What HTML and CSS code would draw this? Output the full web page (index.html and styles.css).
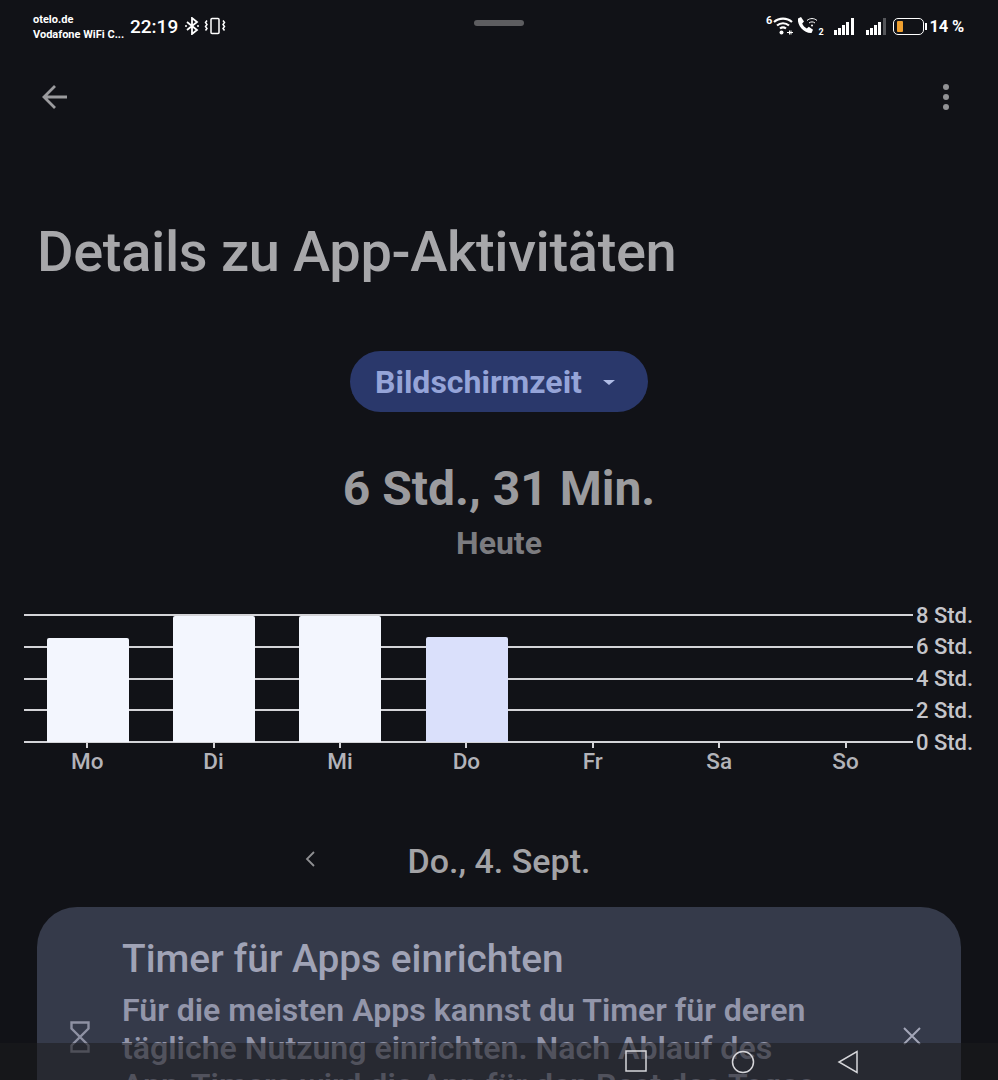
FILE: index.html
```html
<!DOCTYPE html>
<html lang="de">
<head>
  <meta charset="utf-8">
  <title>Details zu App-Aktivitäten</title>
  <link rel="stylesheet" href="styles.css">
</head>
<body>
<div class="screen">

  <div class="status-bar">
    <div class="carrier">
      <div>otelo.de</div>
      <div>Vodafone WiFi C...</div>
    </div>
    <div class="clock">22:19</div>
    <svg class="st-icon" width="14" height="18" viewBox="0 0 14 18" fill="none" stroke="#fff" stroke-width="1.800">
      <path d="M2 5l10 8-5 4V1l5 4-10 8"/>
      <circle cx="1" cy="9" r="1" fill="#fff" stroke="none"/>
      <circle cx="13" cy="9" r="1" fill="#fff" stroke="none"/>
    </svg>
    <svg class="st-icon vibrate" width="22" height="18" viewBox="0 0 22 18" fill="none" stroke="#fff" stroke-width="1.5">
      <rect x="7" y="1.5" width="8" height="15" rx="1"/>
      <path d="M3 3.500l-1.500 2 1.500 2-1.500 2 1.500 2-1.500 2M19 3.500l1.500 2-1.500 2 1.500 2-1.500 2 1.500 2"/>
    </svg>
    <div class="notch"></div>
    <div class="status-right">
      <span class="tiny six">6</span>
      <svg width="20" height="18" viewBox="0 0 20 18" fill="none" stroke="#fff" stroke-width="2.200">
        <path d="M1 5c5-4.500 13-4.500 18 0M4 8.500c3.400-3 8.600-3 12 0M7 11.500c1.800-1.400 4.200-1.400 6 0"/>
        <circle cx="8.500" cy="15.500" r="2" fill="#fff" stroke="none"/>
        <path d="M14 15.500h6M16.500 13.500v4M18 13.500v4" stroke-width="1"/>
      </svg>
      <svg class="call" width="22" height="20" viewBox="0 0 22 20">
        <path d="M1 2.500l3-1.500 3 4.500-1.800 2c.8 2 2.600 4 4.600 5l2-1.800 4.200 3-1.500 3.300c-7 .5-14.500-7-13.500-14.500z" fill="#fff"/>
        <path d="M10 4.500c3-2.600 7-2.600 10 0M12 7c1.800-1.500 4.200-1.500 6 0" fill="none" stroke="#fff" stroke-width="1"/>
        <circle cx="15" cy="9.500" r="1" fill="#fff"/>
      </svg>
      <span class="tiny two">2</span>
      <div class="signal">
        <i class="s1"></i><i class="s2"></i><i class="s3"></i><i class="s4"></i><i class="s5"></i>
      </div>
      <div class="signal second">
        <i class="s1"></i><i class="s2"></i><i class="s3"></i><i class="s4"></i><i class="s5 off"></i>
      </div>
      <div class="battery"><div class="battery-level"></div></div>
      <div class="battery-tip"></div>
      <div class="battery-text">14 %</div>
    </div>
  </div>

  <div class="toolbar">
    <svg width="28" height="28" viewBox="0 0 28 28" fill="none" stroke="#9b9b9e" stroke-width="2.800">
      <path d="M26 14H3M14 3L3 14l11 11"/>
    </svg>
    <div class="dots"><i></i><i></i><i></i></div>
  </div>

  <h1 class="title">Details zu App-Aktivitäten</h1>

  <div class="pill-row">
    <div class="pill">
      <span>Bildschirmzeit</span>
      <div class="caret"></div>
    </div>
  </div>

  <div class="total">6 Std., 31 Min.</div>
  <div class="today">Heute</div>

  <div class="chart">
    <div class="plot">
      <div class="grid-row"><div class="grid-line"></div><span>8 Std.</span></div>
      <div class="grid-row"><div class="grid-line"></div><span>6 Std.</span></div>
      <div class="grid-row"><div class="grid-line"></div><span>4 Std.</span></div>
      <div class="grid-row"><div class="grid-line"></div><span>2 Std.</span></div>
      <div class="grid-row"><div class="grid-line"></div><span>0 Std.</span></div>
      <div class="bars">
        <div class="bar-col"><div class="bar" style="height:104px"></div></div>
        <div class="bar-col"><div class="bar" style="height:126px"></div></div>
        <div class="bar-col"><div class="bar" style="height:126px"></div></div>
        <div class="bar-col"><div class="bar current" style="height:105px"></div></div>
        <div class="bar-col"></div>
        <div class="bar-col"></div>
        <div class="bar-col"></div>
      </div>
    </div>
    <div class="days">
      <div class="day">Mo</div>
      <div class="day">Di</div>
      <div class="day">Mi</div>
      <div class="day">Do</div>
      <div class="day">Fr</div>
      <div class="day">Sa</div>
      <div class="day">So</div>
    </div>
  </div>

  <div class="date-row">
    <svg class="prev" width="12" height="18" viewBox="0 0 12 18" fill="none" stroke="#8f8f92" stroke-width="1.800">
      <path d="M10 2L3 9l7 7"/>
    </svg>
    <div class="date">Do., 4. Sept.</div>
  </div>

  <div class="card">
    <svg class="hourglass" width="20" height="32" viewBox="0 0 20 32" fill="none" stroke="#8e91a3" stroke-width="2.400">
      <path d="M1.500 1.500h17v6L1.500 24.500v6h17v-6L1.500 7.500z"/>
    </svg>
    <div class="card-body">
      <div class="card-title">Timer für Apps einrichten</div>
      <div class="card-text">Für die meisten Apps kannst du Timer für deren tägliche Nutzung einrichten. Nach Ablauf des <span class="nobreak">App-Timers</span> wird die App für den Rest des Tages</div>
    </div>
    <svg class="close" width="20" height="20" viewBox="0 0 20 20" fill="none" stroke="#a3a6b8" stroke-width="2">
      <path d="M2 2l16 16M18 2L2 18"/>
    </svg>
  </div>

  <!-- system navigation, drawn over the page -->
  <div class="nav-bar">
    <svg width="22" height="22" viewBox="0 0 22 22" fill="none" stroke="#d6d6da" stroke-width="1.500">
      <rect x="1" y="1" width="20" height="20"/>
    </svg>
    <svg width="24" height="24" viewBox="0 0 24 24" fill="none" stroke="#d6d6da" stroke-width="1.500">
      <circle cx="12" cy="12" r="10.500"/>
    </svg>
    <svg class="nav-back" width="22" height="24" viewBox="0 0 22 24" fill="none" stroke="#d6d6da" stroke-width="1.500">
      <path d="M20 1.500v21L2 12z"/>
    </svg>
  </div>

</div>
</body>
</html>
```

FILE: styles.css
```css
* {
  box-sizing: border-box;
}

body {
  margin: 0;
  background: #111217;
  font-family: Roboto, "Liberation Sans", sans-serif;
}

.screen {
  position: relative;
  width: 998px;
  height: 1080px;
  overflow: hidden;
  background: #111217;
}

/* status bar */
.status-bar {
  position: relative;
  display: flex;
  align-items: center;
  height: 54px;
  padding: 0 34px 2px 33px;
  color: #fff;
}

.carrier {
  width: 97px;
  font-size: 11px;
  font-weight: 700;
  line-height: 15px;
  white-space: nowrap;
  margin-bottom: -2px;
}

.clock {
  font-size: 19px;
  font-weight: 500;
  margin-right: 7px;
}

.vibrate {
  margin-left: 5px;
}

.notch {
  position: absolute;
  left: 474px;
  top: 20px;
  width: 50px;
  height: 6px;
  border-radius: 3px;
  background: #5d5d60;
}

.status-right {
  display: flex;
  align-items: center;
  margin-left: auto;
}

.tiny {
  font-size: 9px;
  font-weight: 700;
}

.six {
  font-size: 11px;
  margin-top: -11px;
  margin-right: 1px;
}

.call {
  margin-left: 4px;
}

.two {
  margin: 11px 0 0 -1px;
}

.signal {
  display: flex;
  align-items: flex-end;
  gap: 1.250px;
  height: 17px;
  margin-left: 10px;
}

.signal.second {
  margin-left: 12px;
}

.signal i {
  display: block;
  width: 3px;
  background: #fff;
}

.signal .s1 { height: 5px; }
.signal .s2 { height: 7px; }
.signal .s3 { height: 10px; }
.signal .s4 { height: 13px; }
.signal .s5 { height: 17px; }
.signal .off { background: #55565a; }

.battery {
  width: 31px;
  height: 17px;
  margin-left: 7px;
  padding: 2px 3px;
  border: 1.500px solid #fff;
  border-radius: 5px;
}

.battery-level {
  width: 6px;
  height: 100%;
  background: #f0a030;
  border-radius: 1px;
}

.battery-tip {
  width: 2px;
  height: 7px;
  margin-left: 1px;
  background: #fff;
}

.battery-text {
  margin-left: 3px;
  font-size: 16.500px;
  font-weight: 700;
  letter-spacing: -0.200px;
  white-space: nowrap;
}

/* toolbar */
.toolbar {
  display: flex;
  justify-content: space-between;
  align-items: center;
  height: 56px;
  margin-top: 8px;
  padding: 14px 49px 0 41px;
}

.dots {
  display: flex;
  flex-direction: column;
  gap: 4px;
}

.dots i {
  display: block;
  width: 6px;
  height: 6px;
  border-radius: 50%;
  background: #929295;
}

.title {
  margin: 98px 0 0 37px;
  font-size: 56px;
  font-weight: 500;
  line-height: 72px;
  letter-spacing: -0.350px;
  color: #a7a7aa;
}

.pill-row {
  display: flex;
  justify-content: center;
  margin-top: 63px;
}

.pill {
  display: flex;
  align-items: center;
  width: 298px;
  height: 61px;
  padding-left: 25px;
  border-radius: 31px;
  background: #2a386b;
  color: #95a4d8;
  font-size: 32px;
  font-weight: 700;
  white-space: nowrap;
}

.caret {
  width: 0;
  height: 0;
  margin: 2px 0 0 21px;
  border-left: 6px solid transparent;
  border-right: 6px solid transparent;
  border-top: 5px solid #b0bde6;
}

.total {
  margin-top: 46px;
  text-align: center;
  font-size: 48px;
  font-weight: 700;
  line-height: 62px;
  color: #9b9b9e;
}

.today {
  margin-top: 3px;
  text-align: center;
  font-size: 32px;
  font-weight: 700;
  line-height: 40px;
  color: #7c7c80;
}

/* chart */
.chart {
  margin: 51px 0 0 24px;
  width: 950px;
}

.plot {
  position: relative;
  display: flex;
  flex-direction: column;
  justify-content: space-between;
  height: 129px;
}

.grid-row {
  display: flex;
  align-items: center;
  height: 2px;
}

.grid-line {
  width: 889px;
  height: 2px;
  background: #d4d4d8;
}

.grid-row span {
  margin-left: 3px;
  font-size: 22px;
  font-weight: 500;
  color: #c5c5ca;
  white-space: nowrap;
}

.bars {
  position: absolute;
  left: 0.500px;
  bottom: 1px;
  display: grid;
  grid-template-columns: repeat(7, 126.400px);
  align-items: end;
}

.bar-col {
  display: flex;
  justify-content: center;
  align-items: flex-end;
}

.bar {
  width: 82px;
  border-radius: 2px 2px 0 0;
  background: #f3f6fe;
}

.bar.current {
  background: #dae0fb;
}

.days {
  display: grid;
  grid-template-columns: repeat(7, 126.400px);
}

.day {
  text-align: center;
  padding-top: 6px;
  font-size: 22.500px;
  font-weight: 500;
  line-height: 24px;
  color: #b3b3b9;
  background: linear-gradient(#d4d4d8, #d4d4d8) center top / 2px 5px no-repeat;
}

.date-row {
  position: relative;
  margin-top: 67px;
  height: 42px;
  display: flex;
  justify-content: center;
  align-items: center;
}

.prev {
  position: absolute;
  left: 304px;
  top: 10px;
}

.date {
  font-size: 34px;
  font-weight: 500;
  color: #a3a3a6;
}

/* timer card, runs off the bottom of the screen */
.card {
  display: flex;
  align-items: center;
  margin: 25px 37px 0;
  height: 260px;
  border-radius: 40px 40px 0 0;
  background: #353a4a;
  position: relative;
}

.hourglass {
  position: absolute;
  left: 33px;
  top: 114px;
}

.card-body {
  align-self: flex-start;
  margin-left: 85px;
  width: 700px;
  padding-top: 29px;
}

.card-title {
  font-size: 38.800px;
  font-weight: 500;
  line-height: 46px;
  color: #a0a3b6;
}

.card-text {
  margin-top: 10px;
  font-size: 32.100px;
  font-weight: 600;
  line-height: 37.500px;
  color: #9396aa;
}

.nobreak {
  white-space: nowrap;
}

.close {
  position: absolute;
  right: 39px;
  top: 119px;
}

.nav-bar {
  position: absolute;
  left: 0;
  right: 0;
  bottom: 0;
  height: 37px;
  display: flex;
  background: rgba(28, 28, 30, 0.55);
  padding: 7px 0 0 625px;
  gap: 84px;
  align-items: flex-start;
}

.nav-back {
  margin-left: -2px;
}
```
